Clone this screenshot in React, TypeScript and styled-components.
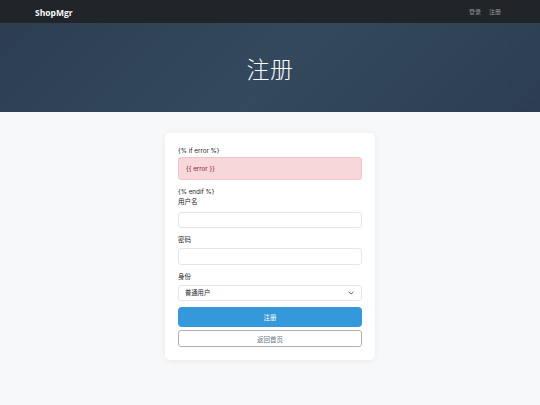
import { FC } from 'react'
import styled, { createGlobalStyle } from 'styled-components'

const GlobalStyle = createGlobalStyle`
  html, body {
    margin: 0;
    padding: 0;
    background: #f7f8fa;
  }
  body {
    font-family: Inter, "Noto Sans", "Noto Sans CJK SC", sans-serif;
    color: #212529;
  }
  * {
    box-sizing: border-box;
  }
`

const App: FC = () => {
  return (
    <>
      <GlobalStyle />
      <Navbar>
        <NavInner>
          <Brand>ShopMgr</Brand>
          <NavLinks>
            <NavLink>登录</NavLink>
            <NavLink>注册</NavLink>
          </NavLinks>
        </NavInner>
      </Navbar>
      <Hero>
        <HeroTitle>注册</HeroTitle>
      </Hero>
      <Main>
        <Card>
          <TemplateText>{'{% if error %}'}</TemplateText>
          <Alert>{'{{ error }}'}</Alert>
          <TemplateText>{'{% endif %}'}</TemplateText>
          <Field $first>
            <Label>用户名</Label>
            <Input type="text" />
          </Field>
          <Field>
            <Label>密码</Label>
            <Input type="password" />
          </Field>
          <Field>
            <Label>身份</Label>
            <SelectBox>
              <span>普通用户</span>
              <svg width="6" height="6" viewBox="0 0 16 16" fill="none">
                <path
                  d="M2 5l6 6 6-6"
                  stroke="#343a40"
                  strokeWidth="2"
                  strokeLinecap="round"
                  strokeLinejoin="round"
                />
              </svg>
            </SelectBox>
          </Field>
          <PrimaryButton>注册</PrimaryButton>
          <OutlineButton>返回首页</OutlineButton>
        </Card>
      </Main>
    </>
  )
}

export default App

const Navbar = styled.nav`
  height: 23px;
  background: #212529;
`
const NavInner = styled.div`
  width: 470px;
  height: 100%;
  margin: 0 auto;
  display: flex;
  align-items: center;
  justify-content: space-between;
`
const Brand = styled.span`
  font-family: "Open Sans", "Noto Sans", sans-serif;
  font-weight: 700;
  font-size: 8.5px;
  color: #f8f9fa;
  padding-top: 1px;
`
const NavLinks = styled.div`
  display: flex;
  gap: 8px;
  margin-right: 4px;
`
const NavLink = styled.span`
  font-family: "Noto Sans CJK SC", sans-serif;
  font-size: 6px;
  color: rgba(255, 255, 255, 0.5);
`
const Hero = styled.header`
  height: 89px;
  background: linear-gradient(135deg, #2c3e50 0%, #34495e 50%, #2c3e50 100%);
  display: flex;
  align-items: center;
  justify-content: center;
`
const HeroTitle = styled.h1`
  margin: 0;
  font-family: "Noto Sans CJK SC", sans-serif;
  font-weight: 300;
  font-size: 23px;
  color: #ffffff;
  letter-spacing: 0.5px;
`
const Main = styled.main`
  padding: 21px 0 40px;
`
const Card = styled.div`
  width: 210px;
  margin: 0 auto;
  background: #ffffff;
  border-radius: 5px;
  box-shadow: 0 1px 6px rgba(0, 0, 0, 0.06);
  padding: 14px 13px 13.3px;
  display: flex;
  flex-direction: column;
`
const TemplateText = styled.div`
  font-size: 6.3px;
  line-height: 9px;
  color: #212529;
`
const Alert = styled.div`
  margin: 1px 0 7.5px;
  height: 23px;
  padding: 0 7px;
  display: flex;
  align-items: center;
  background: #f8d7da;
  border: 1px solid #f5c2c7;
  border-radius: 3px;
  color: #842029;
  font-size: 6.3px;
`
const Field = styled.div<{ $first?: boolean }>`
  display: flex;
  flex-direction: column;
  margin-top: ${({ $first }) => ($first ? '-1px' : '0')};
  margin-bottom: 6px;

  label {
    margin-bottom: ${({ $first }) => ($first ? '6px' : '4px')};
  }
`
const Label = styled.label`
  font-family: "Noto Sans CJK SC", sans-serif;
  font-size: 6.5px;
  line-height: 10px;
  color: #212529;
`
const Input = styled.input`
  height: 16.5px;
  width: 100%;
  border: 1px solid #e3e6ea;
  border-radius: 3px;
  background: #ffffff;
  padding: 0 6px;
  outline: none;
`
const SelectBox = styled.div`
  height: 16.5px;
  border: 1px solid #e3e6ea;
  border-radius: 3px;
  background: #ffffff;
  padding: 0 7px 0 6px;
  display: flex;
  align-items: center;
  justify-content: space-between;
  font-family: "Noto Sans CJK SC", sans-serif;
  font-size: 6.3px;
  color: #212529;
`
const PrimaryButton = styled.button`
  height: 20px;
  border: none;
  border-radius: 4px;
  background: #3498db;
  color: #ffffff;
  font-family: "Noto Sans CJK SC", sans-serif;
  font-size: 6.5px;
  cursor: pointer;
`
const OutlineButton = styled.button`
  height: 16.7px;
  margin-top: 3.3px;
  border: 1px solid #adb1b5;
  border-radius: 3px;
  background: #ffffff;
  color: #6c757d;
  font-family: "Noto Sans CJK SC", sans-serif;
  font-size: 6.5px;
  cursor: pointer;
`
